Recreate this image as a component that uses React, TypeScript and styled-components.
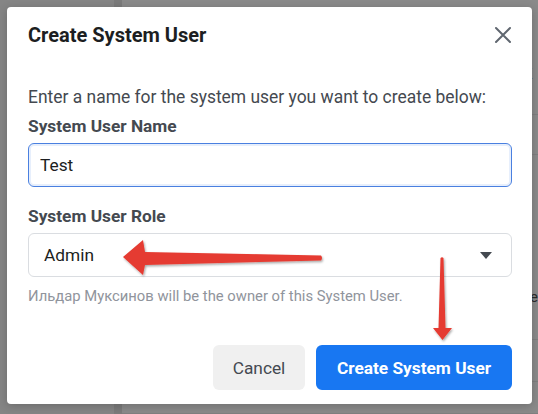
import styled, { createGlobalStyle } from 'styled-components';

const GlobalStyle = createGlobalStyle`
  html, body {
    margin: 0;
    padding: 0;
    width: 538px;
    height: 414px;
    overflow: hidden;
    font-family: Roboto, 'Liberation Sans', Arial, sans-serif;
  }
`;

const pageRows = [
  { id: 1, height: 115, top: 67, text: 'K' },
  { id: 2, height: 40, top: 19, text: 's' },
  { id: 3, height: 185, top: 120, text: 's\nve' },
  { id: 4, height: 42, top: 0, text: '' },
  { id: 5, height: 32, top: 0, text: '' },
];

const CloseIcon = () => (
  <svg width='18' height='18' viewBox='0 0 18 18'>
    <path d='M2 2 L16 16 M16 2 L2 16' stroke='#606770' strokeWidth='2' strokeLinecap='round' />
  </svg>
);

const Caret = () => (
  <svg width='12' height='7' viewBox='0 0 12 7'>
    <path d='M0 0 H12 L6 7 Z' fill='#444950' />
  </svg>
);

const Arrows = () => (
  <ArrowLayer width='538' height='414' viewBox='0 0 538 414'>
    <defs>
      <filter id='shadow' x='-20%' y='-20%' width='140%' height='140%'>
        <feDropShadow dx='1' dy='1.5' stdDeviation='0.8' floodColor='#000' floodOpacity='0.35' />
      </filter>
    </defs>
    <g fill='#e53b31' filter='url(#shadow)'>
      <path d='M123 257 L143 240 L145 252 L321 255.5 Q323 258 321 260.5 L145 265 L143 275 Z' />
      <path d='M440.5 258 Q442 256.5 443.5 258 L445.5 328 L452 328 L442.5 340 L433 328 L438.5 328 Z' />
    </g>
  </ArrowLayer>
);

export default function App() {
  return (
    <>
      <GlobalStyle />
      <Page>
        <Sidebar />
        <SideDivider />
        <Content>
          {pageRows.map((row) => (
            <PageRow key={row.id} height={row.height} top={row.top}>
              {row.text}
            </PageRow>
          ))}
        </Content>
        <Modal>
          <Header>
            <Title>Create System User</Title>
            <CloseButton>
              <CloseIcon />
            </CloseButton>
          </Header>
          <Body>
            <Intro>Enter a name for the system user you want to create below:</Intro>
            <Label>System User Name</Label>
            <Input defaultValue='Test' />
            <Label $spaced>System User Role</Label>
            <Select>
              <span>Admin</span>
              <Caret />
            </Select>
            <Helper>Ильдар Муксинов will be the owner of this System User.</Helper>
          </Body>
          <Footer>
            <Button>Cancel</Button>
            <Button $primary>Create System User</Button>
          </Footer>
        </Modal>
        <Arrows />
      </Page>
    </>
  );
}

const Page = styled.div`
  position: relative;
  display: flex;
  width: 538px;
  height: 414px;
  background: #8a8a8a;
`;

const Sidebar = styled.div`
  width: 122px;
  background: #858585;
`;

const SideDivider = styled.div`
  width: 9px;
  background: #7b7b7b;
`;

const Content = styled.div`
  flex: 1;
  display: flex;
  flex-direction: column;
`;

const PageRow = styled.div<{ height: number; top: number }>`
  height: ${(p) => p.height}px;
  box-sizing: border-box;
  border-bottom: 1px solid #7f7f7f;
  padding: ${(p) => p.top}px 0 0 401px;
  font-size: 15px;
  line-height: 15px;
  color: #2a2a2a;
  white-space: pre;
  overflow: hidden;
`;

const Modal = styled.div`
  position: absolute;
  left: 7px;
  top: 7px;
  width: 525px;
  height: 397px;
  box-sizing: border-box;
  display: flex;
  flex-direction: column;
  background: #fff;
  border-radius: 4px;
  box-shadow: 0 2px 10px rgba(0, 0, 0, 0.2);
`;

const Header = styled.div`
  height: 56px;
  display: flex;
  align-items: center;
  justify-content: space-between;
  padding: 0 20px 0 21px;
`;

const Title = styled.div`
  font-size: 20px;
  font-weight: 700;
  color: #1c1e21;
`;

const CloseButton = styled.div`
  display: flex;
  align-items: center;
  justify-content: center;
  width: 20px;
  height: 20px;
  margin-right: -1px;
`;

const Body = styled.div`
  display: flex;
  flex-direction: column;
  padding: 24px 20px 0 21px;
`;

const Intro = styled.div`
  font-size: 17.45px;
  line-height: 20px;
  color: #444950;
`;

const Label = styled.div<{ $spaced?: boolean }>`
  margin-top: ${(p) => (p.$spaced ? 19 : 9)}px;
  font-size: 17.3px;
  line-height: 20px;
  font-weight: 700;
  color: #444950;
`;

const Input = styled.input`
  margin-top: 7px;
  height: 44px;
  box-sizing: border-box;
  border: 1px solid #4a80e0;
  border-radius: 6px;
  box-shadow: inset 0 0 0 2px #e7effc;
  padding: 0 11px;
  font-family: inherit;
  font-size: 17.3px;
  color: #1c1e21;
  outline: none;
`;

const Select = styled.div`
  margin-top: 7px;
  height: 44px;
  box-sizing: border-box;
  display: flex;
  align-items: center;
  justify-content: space-between;
  border: 1px solid #dadde1;
  border-radius: 6px;
  padding: 0 19px 0 15px;
  font-size: 17.3px;
  color: #1c1e21;
`;

const Helper = styled.div`
  margin-top: 11px;
  font-size: 14.8px;
  line-height: 16px;
  color: #90949c;
`;

const Footer = styled.div`
  margin-top: auto;
  display: flex;
  justify-content: flex-end;
  gap: 11px;
  padding: 0 20px 14px;
`;

const Button = styled.div<{ $primary?: boolean }>`
  height: 45px;
  display: flex;
  align-items: center;
  justify-content: center;
  padding: 0 18px;
  box-sizing: border-box;
  min-width: ${(p) => (p.$primary ? 196 : 92)}px;
  border-radius: 6px;
  font-size: 17.3px;
  font-weight: ${(p) => (p.$primary ? 700 : 400)};
  color: ${(p) => (p.$primary ? '#fff' : '#444950')};
  background: ${(p) => (p.$primary ? '#1877f2' : '#f0f0f0')};
`;

const ArrowLayer = styled.svg`
  position: absolute;
  left: 0;
  top: 0;
  pointer-events: none;
`;
